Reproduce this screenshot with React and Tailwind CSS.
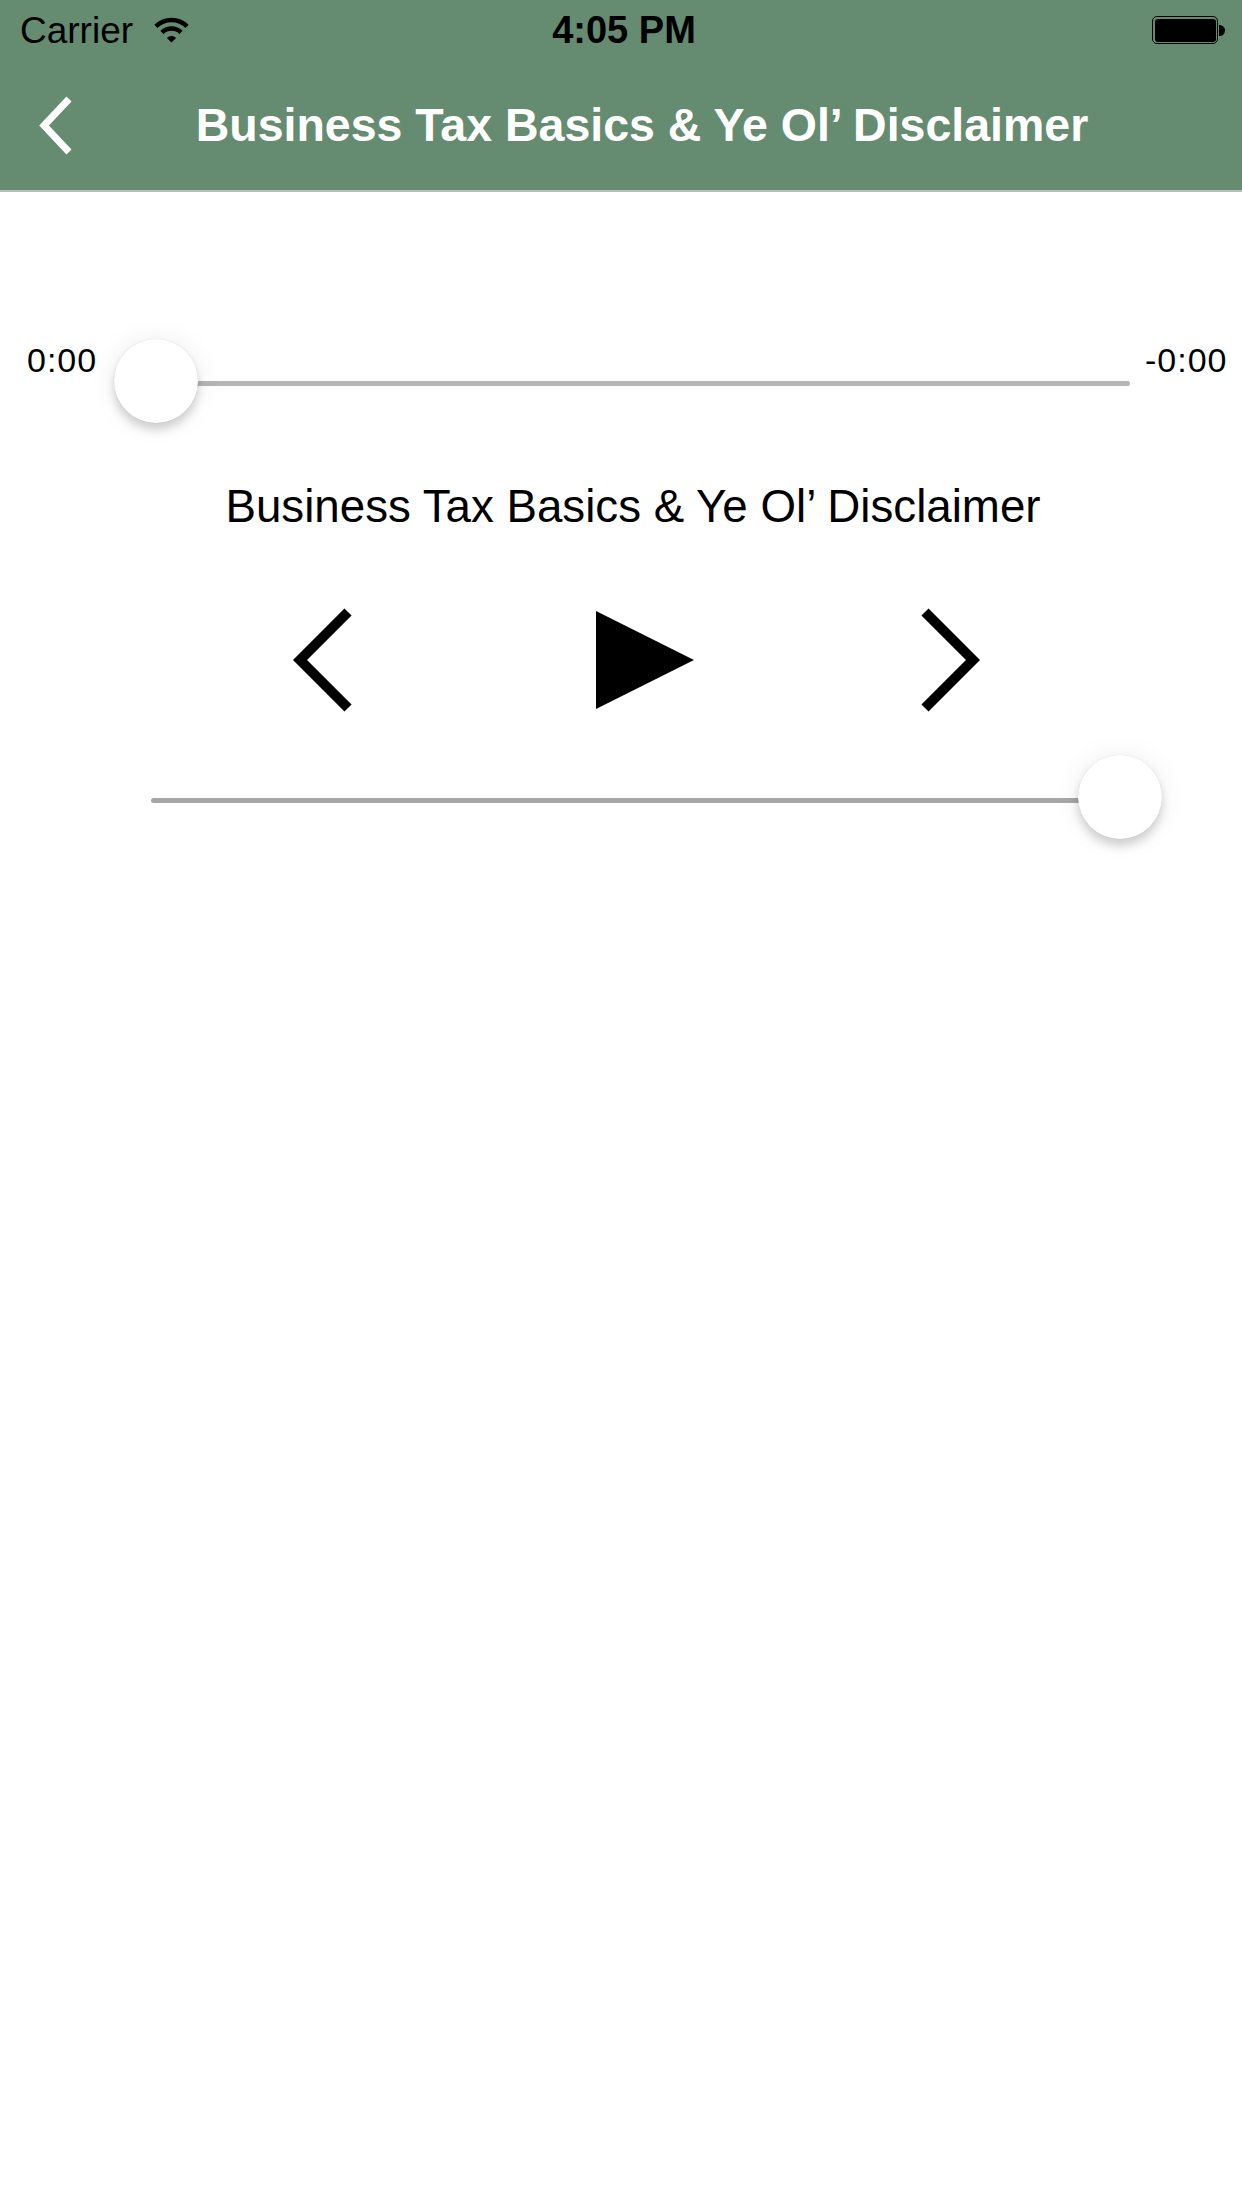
import React from "react";

function WifiIcon() {
  return (
    <svg width="37" height="26" viewBox="0 0 37 26" className="ml-[20px]">
      <path d="M2.94 9.44 A22 22 0 0 1 34.06 9.44" fill="none" stroke="black" strokeWidth="4.5" />
      <path d="M8.95 15.45 A13.5 13.5 0 0 1 28.05 15.45" fill="none" stroke="black" strokeWidth="4.5" />
      <path d="M18.5 25.5 L13.9 20.9 A6.5 6.5 0 0 1 23.1 20.9 Z" fill="black" />
    </svg>
  );
}

function Battery() {
  return (
    <div className="flex items-center">
      <div className="h-[28px] w-[66px] rounded-[5px] border-[1.5px] border-black p-[1.5px]">
        <div className="h-full w-full rounded-[3px] bg-black" />
      </div>
      <div className="ml-[1px] h-[11px] w-[6px] rounded-r-full bg-black" />
    </div>
  );
}

function Chevron({ dir, color = "black", width = 61, height = 106, stroke = 10 }) {
  const pts =
    dir === "left"
      ? `${width - 6},5 7,${height / 2} ${width - 6},${height - 5}`
      : `6,5 ${width - 7},${height / 2} 6,${height - 5}`;
  return (
    <svg width={width} height={height} viewBox={`0 0 ${width} ${height}`}>
      <polyline points={pts} fill="none" stroke={color} strokeWidth={stroke} strokeLinejoin="miter" strokeMiterlimit="4" />
    </svg>
  );
}

function Thumb({ className }) {
  return (
    <div
      className={
        "absolute top-0 h-[84px] w-[84px] rounded-full bg-white shadow-[0_7px_10px_rgba(0,0,0,0.16),0_0_28px_rgba(0,0,0,0.07),0_0_1px_rgba(0,0,0,0.15)] " +
        className
      }
    />
  );
}

export default function App() {
  return (
    <div className="min-h-[2208px] w-[1242px] bg-white font-['Liberation_Sans',Arial,sans-serif] text-black">
      {/* status bar */}
      <div className="grid h-[60px] grid-cols-3 items-center bg-[#658c70]">
        <div className="flex items-center pl-[20px]">
          <span className="text-[37px] leading-none">Carrier</span>
          <WifiIcon />
        </div>
        <div className="pl-[6px] text-center text-[38px] font-bold leading-none">4:05 PM</div>
        <div className="flex justify-end pr-[17px]">
          <Battery />
        </div>
      </div>

      {/* navigation bar */}
      <div className="flex h-[132px] items-center border-b-2 border-[#b9bdb9] bg-[#658c70]">
        <div className="ml-[37px] flex w-[38px] items-center">
          <Chevron dir="left" color="white" width={38} height={63} stroke={7} />
        </div>
        <div className="flex-1 pr-[33px] text-center text-[46.5px] font-bold leading-none text-white">
          Business Tax Basics &amp; Ye Ol’ Disclaimer
        </div>
      </div>

      {/* progress */}
      <div className="mt-[147px] flex h-[84px] items-start">
        <span className="ml-[27px] mt-[4px] w-[69px] text-[34px] leading-none tracking-[1px]">0:00</span>
        <div className="relative ml-[59px] h-[84px] w-[975px]">
          <div className="mt-[42px] h-[5px] w-full rounded-full bg-[#b5b5b5]" />
          <Thumb className="left-[-41px]" />
        </div>
        <span className="ml-[15px] mt-[4px] text-[34px] leading-none tracking-[1px]">-0:00</span>
      </div>

      <div className="mt-[61px] pl-[24px] text-center text-[45.7px] leading-none">
        Business Tax Basics &amp; Ye Ol’ Disclaimer
      </div>

      {/* transport controls */}
      <div className="mt-[77px] flex h-[106px] items-center">
        <button className="ml-[293px]">
          <Chevron dir="left" />
        </button>
        <button className="ml-[242px]">
          <svg width="98" height="98" viewBox="0 0 98 98">
            <polygon points="0,0 98,49 0,98" fill="black" />
          </svg>
        </button>
        <button className="ml-[225px]">
          <Chevron dir="right" />
        </button>
      </div>

      {/* volume */}
      <div className="mt-[42px] flex h-[84px]">
        <div className="relative ml-[151px] h-[84px] w-[969px]">
          <div className="mt-[43px] h-[5px] w-full rounded-full bg-[#a7a7a7]" />
          <Thumb className="right-[-42px]" />
        </div>
      </div>
    </div>
  );
}
